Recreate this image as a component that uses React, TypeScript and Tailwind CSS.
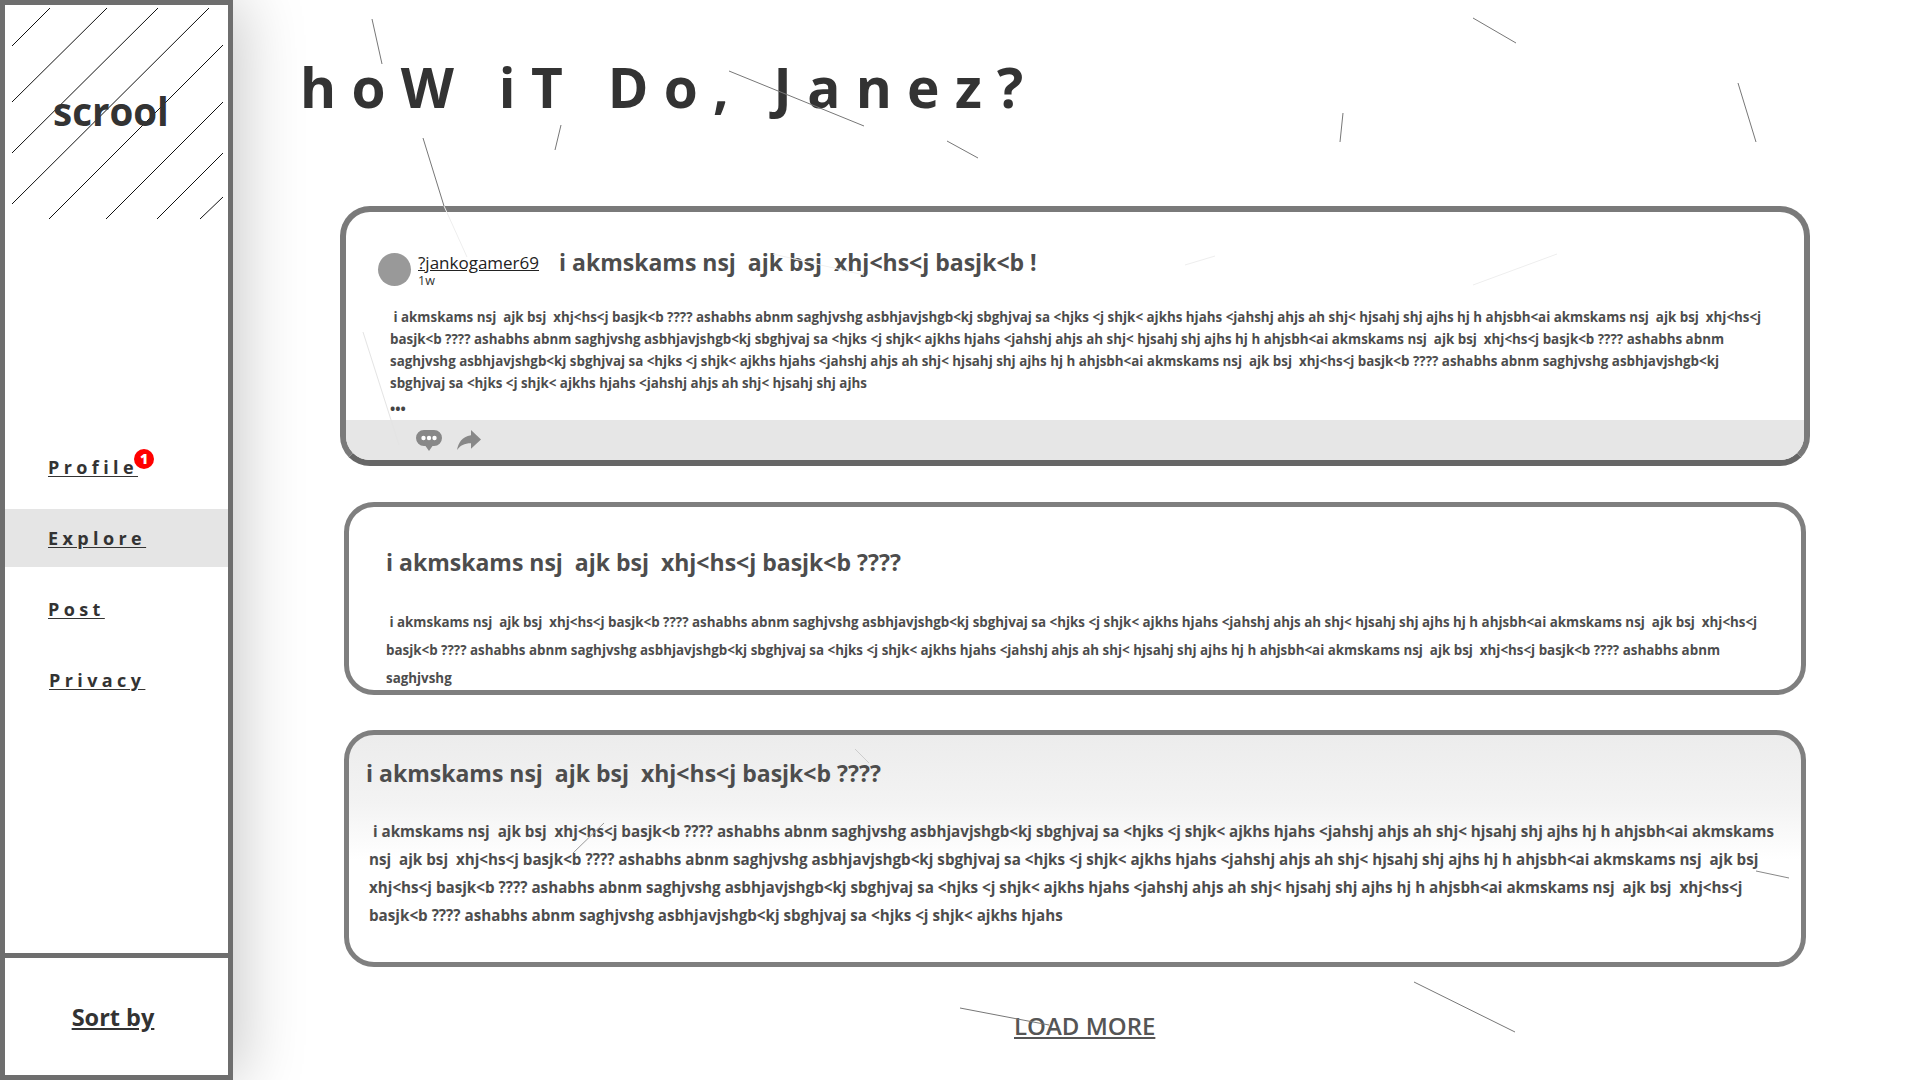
import { IoMdShareAlt } from "react-icons/io";

const A =
  " i akmskams nsj  ajk bsj  xhj<hs<j basjk<b ???? ashabhs abnm saghjvshg asbhjavjshgb<kj sbghjvaj sa <hjks <j shjk< ajkhs hjahs <jahshj ahjs ah shj< hjsahj shj ajhs hj h ahjsbh<ai akmskams nsj  ajk bsj  xhj<hs<j";
const B =
  "basjk<b ???? ashabhs abnm saghjvshg asbhjavjshgb<kj sbghjvaj sa <hjks <j shjk< ajkhs hjahs <jahshj ahjs ah shj< hjsahj shj ajhs hj h ahjsbh<ai akmskams nsj  ajk bsj  xhj<hs<j basjk<b ???? ashabhs abnm";
const C =
  "saghjvshg asbhjavjshgb<kj sbghjvaj sa <hjks <j shjk< ajkhs hjahs <jahshj ahjs ah shj< hjsahj shj ajhs hj h ahjsbh<ai akmskams nsj  ajk bsj  xhj<hs<j basjk<b ???? ashabhs abnm saghjvshg asbhjavjshgb<kj";
const D = "sbghjvaj sa <hjks <j shjk< ajkhs hjahs <jahshj ahjs ah shj< hjsahj shj ajhs";

const bigLines = [
  " i akmskams nsj  ajk bsj  xhj<hs<j basjk<b ???? ashabhs abnm saghjvshg asbhjavjshgb<kj sbghjvaj sa <hjks <j shjk< ajkhs hjahs <jahshj ahjs ah shj< hjsahj shj ajhs hj h ahjsbh<ai akmskams",
  "nsj  ajk bsj  xhj<hs<j basjk<b ???? ashabhs abnm saghjvshg asbhjavjshgb<kj sbghjvaj sa <hjks <j shjk< ajkhs hjahs <jahshj ahjs ah shj< hjsahj shj ajhs hj h ahjsbh<ai akmskams nsj  ajk bsj",
  "xhj<hs<j basjk<b ???? ashabhs abnm saghjvshg asbhjavjshgb<kj sbghjvaj sa <hjks <j shjk< ajkhs hjahs <jahshj ahjs ah shj< hjsahj shj ajhs hj h ahjsbh<ai akmskams nsj  ajk bsj  xhj<hs<j",
  "basjk<b ???? ashabhs abnm saghjvshg asbhjavjshgb<kj sbghjvaj sa <hjks <j shjk< ajkhs hjahs",
];

const heading = "i akmskams nsj  ajk bsj  xhj<hs<j basjk<b ????";

const hatch = [
  [12, 46, 50, 8],
  [12, 102, 107, 8],
  [12, 153, 158, 8],
  [12, 204, 209, 8],
  [49, 219, 223, 45],
  [106, 219, 223, 102],
  [157, 219, 223, 153],
  [200, 219, 223, 197],
];

// scratches on the page, x y x y colour
const scratches: [number, number, number, number, string][] = [
  [372, 19, 382, 64, "#777"],
  [1473, 18, 1516, 43, "#777"],
  [729, 71, 864, 126, "#777"],
  [561, 125, 555, 150, "#777"],
  [947, 141, 978, 158, "#777"],
  [1343, 113, 1340, 142, "#777"],
  [1738, 83, 1756, 142, "#777"],
  [423, 138, 444, 206, "#777"],
  [444, 206, 467, 257, "#eee"],
  [1185, 265, 1215, 256, "#eee"],
  [1473, 285, 1557, 254, "#eee"],
  [363, 332, 399, 445, "#e4e4e4"],
  [773, 254, 864, 275, "#f0f0f0"],
  [855, 749, 869, 763, "#ccc"],
  [604, 823, 573, 853, "#999"],
  [1756, 871, 1789, 878, "#888"],
  [960, 1008, 1049, 1025, "#777"],
  [1414, 982, 1515, 1032, "#777"],
];

function NavItem({ label, active, className }: { label: string; active?: boolean; className: string }) {
  return (
    <div className={`flex h-[58px] items-center ${className} ${active ? "bg-[#e5e5e5]" : ""}`}>
      <a className="relative text-[18px] font-bold tracking-[4.4px] text-[#333] underline underline-offset-2">
        {label}
        {label === "Profile" && (
          <span className="absolute -top-[5px] -right-[16px] flex h-5 w-5 items-center justify-center rounded-full bg-[#f00] text-[14px] leading-5 font-extrabold tracking-normal text-white no-underline">
            1
          </span>
        )}
      </a>
    </div>
  );
}

function Lines({ lines, className }: { lines: string[]; className: string }) {
  return (
    <div className={`whitespace-pre font-bold text-[#4d4d4d] ${className}`}>
      {lines.map((line, i) => (
        <div key={i}>{line}</div>
      ))}
    </div>
  );
}

export default function App() {
  return (
    <div className="relative flex h-screen overflow-hidden bg-white font-['Open_Sans',sans-serif]">
      <aside className="z-10 flex h-screen w-[233px] shrink-0 flex-col border-[5px] border-[#6e6e6e] bg-white shadow-[8px_0_60px_rgba(0,0,0,0.22)]">
        <div className="relative flex h-[433px] shrink-0 flex-col">
          <svg className="absolute -top-[5px] -left-[5px]" width="233" height="230">
            {hatch.map(([x1, y1, x2, y2], i) => (
              <line key={i} x1={x1} y1={y1} x2={x2} y2={y2} stroke="#111" strokeWidth="1" />
            ))}
          </svg>
          <h1 className="relative mt-[80px] pl-[48px] text-[38.5px] leading-[52px] font-bold text-[#333]">scrool</h1>
        </div>
        <nav className="flex flex-col gap-[13px]">
          <NavItem label="Profile" className="pl-[43px]" />
          <NavItem label="Explore" active className="pl-[43px]" />
          <NavItem label="Post" className="pl-[43px]" />
          <NavItem label="Privacy" className="pl-[44px]" />
        </nav>
        <div className="mt-auto flex h-[122px] items-center justify-center border-t-[5px] border-[#6e6e6e] pt-[2px] pr-[7px]">
          <a className="text-[23.5px] font-bold text-[#333] underline underline-offset-2">Sort by</a>
        </div>
      </aside>

      <main className="flex min-w-0 flex-1 flex-col">
        <h2 className="mt-[48px] ml-[67px] h-[78px] whitespace-pre text-[55px] leading-[78px] font-bold tracking-[15.3px] text-[#333]">
          hoW iT Do, Janez?
        </h2>

        <section className="mt-[80px] ml-[107px] flex h-[260px] w-[1470px] flex-col overflow-hidden rounded-[30px] border-[6px] border-[#7a7a7a] border-b-[#666]">
          <div className="flex items-start pt-[35px] pl-[32px]">
            <div className="mt-[6px] h-[33px] w-[33px] rounded-full bg-[#999]" />
            <div className="ml-[7px] flex w-[141px] flex-col pt-[4px]">
              <a className="text-[17px] leading-[23px] font-normal text-[#222] underline">?jankogamer69</a>
              <span className="text-[12.5px] leading-[13px] text-[#333]">1w</span>
            </div>
            <h3 className="-mt-[1px] whitespace-pre text-[23px] leading-[32px] font-bold text-[#4d4d4d]">
              i akmskams nsj  ajk bsj  xhj{"<"}hs{"<"}j basjk{"<"}b !
            </h3>
          </div>
          <div className="mt-[19px] pl-[44px]">
            <Lines lines={[A, B, C, D]} className="text-[13.37px] leading-[22px]" />
            <div className="h-[24px] text-[14px] leading-[30px] font-bold text-[#444]">•••</div>
          </div>
          <div className="mt-auto flex h-[40px] shrink-0 items-center gap-[11px] bg-[#e6e6e6] pl-[70px]">
            <svg width="26" height="24" viewBox="0 0 26 24">
              <path d="M8 2h10a8 8 0 0 1 0 16h-1.5l-3.5 5-3.5-5H8A8 8 0 0 1 8 2z" fill="#888" />
              <circle cx="7.5" cy="10" r="2.2" fill="#fff" />
              <circle cx="13" cy="10" r="2.2" fill="#fff" />
              <circle cx="18.5" cy="10" r="2.2" fill="#fff" />
            </svg>
            <IoMdShareAlt className="h-[32px] w-[32px] text-[#888]" />
          </div>
        </section>

        <section className="mt-[36px] ml-[111px] h-[193px] w-[1462px] overflow-hidden rounded-[30px] border-[5px] border-[#7f7f7f] pt-[39px] pl-[37px]">
          <h3 className="whitespace-pre text-[23px] leading-[32px] font-bold text-[#4d4d4d]">{heading}</h3>
          <Lines lines={[A, B, "saghjvshg"]} className="mt-[30px] text-[13.37px] leading-[28px]" />
        </section>

        <section className="mt-[35px] ml-[111px] h-[237px] w-[1462px] overflow-hidden rounded-[30px] border-[5px] border-[#7f7f7f] bg-[linear-gradient(180deg,#ececec_0%,#f3f3f3_30%,#fff_55%)] pt-[22px] pl-[17px]">
          <h3 className="whitespace-pre text-[23px] leading-[32px] font-bold text-[#4d4d4d]">{heading}</h3>
          <Lines lines={bigLines} className="mt-[28px] ml-[3px] text-[15.2px] leading-[28px]" />
        </section>

        <div className="mt-[43px] ml-[781px]">
          <a className="text-[24px] leading-[32px] font-semibold text-[#555] underline">LOAD MORE</a>
        </div>
      </main>

      <svg className="pointer-events-none absolute inset-0 z-20" width="1920" height="1080">
        {scratches.map(([x1, y1, x2, y2, color], i) => (
          <line key={i} x1={x1} y1={y1} x2={x2} y2={y2} stroke={color} strokeWidth="1" />
        ))}
      </svg>
    </div>
  );
}
